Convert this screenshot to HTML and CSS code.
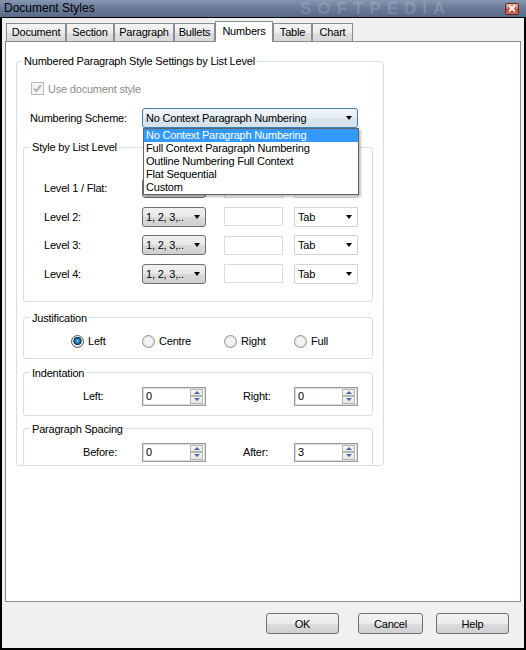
FILE: index.html
```html
<!DOCTYPE html>
<html>
<head>
<meta charset="utf-8">
<title>Document Styles</title>
<link rel="stylesheet" href="styles.css">
</head>
<body>
<div class="window">
  <div class="titlebar">
    <span class="title">Document Styles</span>
    <span class="watermark">SOFTPEDIA</span>
    <span class="close"><svg width="8" height="7" viewBox="0 0 8 7"><path d="M1 0.5 L7 6.5 M7 0.5 L1 6.5" stroke="#fff" stroke-width="1.8"/></svg></span>
  </div>
  <div class="frame">
    <div class="tabs">
      <div class="tab t-doc">Document</div>
      <div class="tab t-sec">Section</div>
      <div class="tab t-par">Paragraph</div>
      <div class="tab t-bul">Bullets</div>
      <div class="tab sel t-num">Numbers</div>
      <div class="tab t-tab">Table</div>
      <div class="tab t-cha">Chart</div>
    </div>
    <div class="panel">
      <fieldset class="outer">
        <legend>Numbered Paragraph Style Settings by List Level</legend>
        <div class="chkrow">
          <span class="chk"><svg width="11" height="11" viewBox="0 0 11 11"><path d="M2.2 5.6 L4.4 8.2 L8.8 2.2" fill="none" stroke="#a8a8a8" stroke-width="1.7"/></svg></span>
          <span>Use document style</span>
        </div>
        <div class="schemerow">
          <span class="lbl-scheme">Numbering Scheme:</span>
          <div class="combo scheme">
            <span class="ctext">No Context Paragraph Numbering</span>
            <span class="arrow"></span>
            <ul class="dropdown">
              <li class="hl">No Context Paragraph Numbering</li>
              <li>Full Context Paragraph Numbering</li>
              <li>Outline Numbering Full Context</li>
              <li>Flat Sequential</li>
              <li>Custom</li>
            </ul>
          </div>
        </div>
        <fieldset class="grp levels">
          <legend>Style by List Level</legend>
          <div class="lvrow">
            <span class="lvlabel">Level 1 / Flat:</span>
            <div class="combo fmt"><span class="ctext">1, 2, 3,..</span><span class="arrow"></span></div>
            <div class="tbox"></div>
            <div class="combo sep"><span class="ctext">Tab</span><span class="arrow"></span></div>
          </div>
          <div class="lvrow">
            <span class="lvlabel">Level 2:</span>
            <div class="combo fmt"><span class="ctext">1, 2, 3,..</span><span class="arrow"></span></div>
            <div class="tbox"></div>
            <div class="combo sep"><span class="ctext">Tab</span><span class="arrow"></span></div>
          </div>
          <div class="lvrow">
            <span class="lvlabel">Level 3:</span>
            <div class="combo fmt"><span class="ctext">1, 2, 3,..</span><span class="arrow"></span></div>
            <div class="tbox"></div>
            <div class="combo sep"><span class="ctext">Tab</span><span class="arrow"></span></div>
          </div>
          <div class="lvrow">
            <span class="lvlabel">Level 4:</span>
            <div class="combo fmt"><span class="ctext">1, 2, 3,..</span><span class="arrow"></span></div>
            <div class="tbox"></div>
            <div class="combo sep"><span class="ctext">Tab</span><span class="arrow"></span></div>
          </div>
        </fieldset>
        <fieldset class="grp just">
          <legend>Justification</legend>
          <div class="radios">
            <span class="ritem r1"><span class="radio on"></span>Left</span>
            <span class="ritem r2"><span class="radio"></span>Centre</span>
            <span class="ritem r3"><span class="radio"></span>Right</span>
            <span class="ritem"><span class="radio"></span>Full</span>
          </div>
        </fieldset>
        <fieldset class="grp ind">
          <legend>Indentation</legend>
          <div class="sprow">
            <span class="splabel1">Left:</span>
            <div class="spin"><span class="sval">0</span><span class="sbtns"><span class="sbtn up"></span><span class="sbtn down"></span></span></div>
            <span class="splabel2">Right:</span>
            <div class="spin"><span class="sval">0</span><span class="sbtns"><span class="sbtn up"></span><span class="sbtn down"></span></span></div>
          </div>
        </fieldset>
        <fieldset class="grp psp">
          <legend>Paragraph Spacing</legend>
          <div class="sprow">
            <span class="splabel1">Before:</span>
            <div class="spin"><span class="sval">0</span><span class="sbtns"><span class="sbtn up"></span><span class="sbtn down"></span></span></div>
            <span class="splabel2">After:</span>
            <div class="spin"><span class="sval">3</span><span class="sbtns"><span class="sbtn up"></span><span class="sbtn down"></span></span></div>
          </div>
        </fieldset>
      </fieldset>
    </div>
    <div class="buttons">
      <div class="btn ok">OK</div>
      <div class="btn cancel">Cancel</div>
      <div class="btn help">Help</div>
    </div>
  </div>
</div>
</body>
</html>
```

FILE: styles.css
```css
* { box-sizing: border-box; }
html, body { margin: 0; padding: 0; }
body {
  width: 526px;
  height: 650px;
  overflow: hidden;
  font-family: "Liberation Sans", Arial, sans-serif;
  font-size: 11px;
  letter-spacing: -0.2px;
  color: #000;
  background: #f0f0f0;
}
.window { width: 526px; height: 650px; display: flex; flex-direction: column; }

.titlebar {
  height: 17px;
  flex: none;
  position: relative;
  display: flex;
  align-items: center;
  overflow: hidden;
  background: linear-gradient(to bottom, #8797b1 0%, #6b7c9a 45%, #5a6b8a 100%);
}
.title { font-size: 12px; letter-spacing: 0; padding-left: 4px; line-height: 17px; position: relative; z-index: 1; }
.watermark {
  position: absolute;
  left: 300px;
  top: 0;
  font-size: 17px;
  line-height: 17px;
  font-weight: bold;
  letter-spacing: 6px;
  color: rgba(255, 255, 255, 0.16);
}
.close {
  margin-left: auto;
  margin-right: 7px;
  width: 14px;
  height: 12px;
  position: relative;
  z-index: 1;
  border: 1px solid #5e2a25;
  border-radius: 2px;
  background: linear-gradient(#eab1a4, #d06a58 50%, #b9402f 51%, #d0705c);
  display: flex;
  align-items: center;
  justify-content: center;
}

.frame {
  flex: 1;
  border: 2px solid #000;
  border-top-width: 1px;
  background: #f0f0f0;
  display: flex;
  flex-direction: column;
}

.tabs { display: flex; align-items: flex-end; height: 23px; padding-left: 4px; flex: none; }
.tab {
  height: 18px;
  line-height: 17px;
  text-align: center;
  border: 1px solid #898c95;
  border-bottom: none;
  background: linear-gradient(#f4f4f4, #ececec 50%, #e0e0e0 51%, #d8d8d8);
  flex: none;
}
.t-doc { width: 60px; }
.t-sec { width: 48px; }
.t-par { width: 60px; }
.t-bul { width: 41px; }
.t-num { width: 58px; }
.t-tab { width: 39px; }
.t-cha { width: 41px; }
.tab.sel {
  height: 21px;
  line-height: 18px;
  margin-bottom: -1px;
  background: #fff;
  position: relative;
  z-index: 1;
}

.panel {
  margin: 0 3px;
  height: 561px;
  flex: none;
  border: 1px solid #898c95;
  background: #fff;
}

fieldset {
  margin: 0;
  padding: 0;
  min-width: 0;
  border: 1px solid #d5dfe5;
  border-radius: 3px;
}
legend { padding: 0 2px; margin-left: 5px; line-height: 14px; }

.outer { margin: 12px 0 0 10px; width: 368px; height: 412px; overflow: hidden; }

.chkrow { display: flex; align-items: center; height: 13px; margin: 14px 0 0 14px; color: #8d8d8d; }
.chk {
  width: 13px; height: 13px;
  border: 1px solid #bcbcbc;
  background: #f4f4f4;
  margin-right: 4px;
  display: flex; align-items: center; justify-content: center;
}

.schemerow { display: flex; align-items: center; height: 20px; margin: 13px 0 0 13px; }
.lbl-scheme { width: 112px; }

.combo { position: relative; display: flex; align-items: center; height: 20px; border-radius: 3px; flex: none; }
.ctext { flex: 1; padding-left: 3px; white-space: nowrap; overflow: hidden; }
.arrow {
  width: 0; height: 0;
  margin-right: 5px;
  border-left: 3.5px solid transparent;
  border-right: 3.5px solid transparent;
  border-top: 4px solid #000;
}
.scheme {
  width: 216px;
  border: 1px solid #3c7fb1;
  background: linear-gradient(#f3f6f9, #e6edf3 50%, #d9e5ee 51%, #d4e1eb);
}
.dropdown {
  position: absolute;
  left: 0;
  top: 19px;
  width: 216px;
  margin: 0;
  padding: 0;
  list-style: none;
  background: #fff;
  border: 1px solid #646464;
  box-shadow: 2px 2px 2px rgba(0, 0, 0, 0.25);
  z-index: 10;
}
.dropdown li { line-height: 13px; height: 13px; padding-left: 2px; white-space: nowrap; }
.dropdown li.hl { background: #3399ff; color: #fff; }

.grp { width: 350px; margin-left: 6px; }
.grp legend { margin-left: 6px; }

.levels { margin-top: 12px; padding: 24px 0 17px 0; }
.lvrow { display: flex; align-items: center; height: 20px; margin-left: 20px; }
.lvrow + .lvrow { margin-top: 8.5px; }
.lvlabel { width: 98px; }
.fmt {
  width: 64px;
  border: 1px solid #707070;
  background: linear-gradient(#f0f0f0, #e8e8e8 50%, #dadada 51%, #d0d0d0);
}
.tbox { width: 59px; height: 19px; margin-left: 18px; border: 1px solid #dcdcdc; background: #fff; flex: none; }
.sep { width: 64px; margin-left: 11px; border: 1px solid #d3d3d3; background: #fff; border-radius: 1px; }

.just { margin-top: 9px; padding: 10px 0 10px 0; }
.radios { display: flex; align-items: center; height: 13px; margin-left: 47px; }
.ritem { display: flex; align-items: center; }
.r1 { width: 71px; }
.r2 { width: 82px; }
.r3 { width: 70px; }
.radio {
  width: 13px; height: 13px;
  border-radius: 50%;
  margin-right: 4px;
  border: 1px solid #919191;
  background: radial-gradient(circle at 50% 50%, #ececec 0, #f6f6f6 30%, #d6d6d6 100%);
  flex: none;
}
.radio.on {
  border-color: #5b5b5b;
  background: radial-gradient(circle at 50% 45%, #7fd0f2 0, #2b88bf 1.6px, #0f4e78 3.3px, #0a3657 3.9px, #f0f0f0 4.4px, #d4d4d4 100%);
}

.ind { margin-top: 7px; padding: 7px 0 9px 0; }
.psp { margin-top: 6px; padding: 7px 0 9px 0; }
.sprow { display: flex; align-items: center; height: 19px; margin-left: 59px; }
.splabel1 { width: 59px; }
.splabel2 { width: 51px; margin-left: 37px; }
.spin {
  width: 64px; height: 19px;
  display: flex;
  border: 1px solid #9c9c9c;
  box-shadow: inset 0 0 0 1px #dadada;
  background: #fff;
  flex: none;
}
.sval { flex: 1; padding-left: 3px; line-height: 17px; }
.sbtns { width: 15px; display: flex; flex-direction: column; padding: 1px 2px 1px 0; }
.sbtn {
  flex: 1;
  border: 1px solid #b4b4b4;
  background: linear-gradient(#f8f8f8, #e4e4e4);
  display: flex; align-items: center; justify-content: center;
}
.sbtn.up::after {
  content: "";
  border-left: 3px solid transparent;
  border-right: 3px solid transparent;
  border-bottom: 3px solid #4f64a0;
}
.sbtn.down::after {
  content: "";
  border-left: 3px solid transparent;
  border-right: 3px solid transparent;
  border-top: 3px solid #4f64a0;
}

.buttons { display: flex; margin-top: 11px; padding-left: 264px; flex: none; }
.btn {
  height: 21px;
  border: 1px solid #707070;
  border-radius: 3px;
  background: linear-gradient(#f2f2f2, #ebebeb 50%, #dddddd 51%, #cfcfcf);
  display: flex; align-items: center; justify-content: center;
  flex: none;
}
.ok { width: 73px; }
.cancel { width: 65px; margin-left: 19px; }
.help { width: 73px; margin-left: 13px; }
```
